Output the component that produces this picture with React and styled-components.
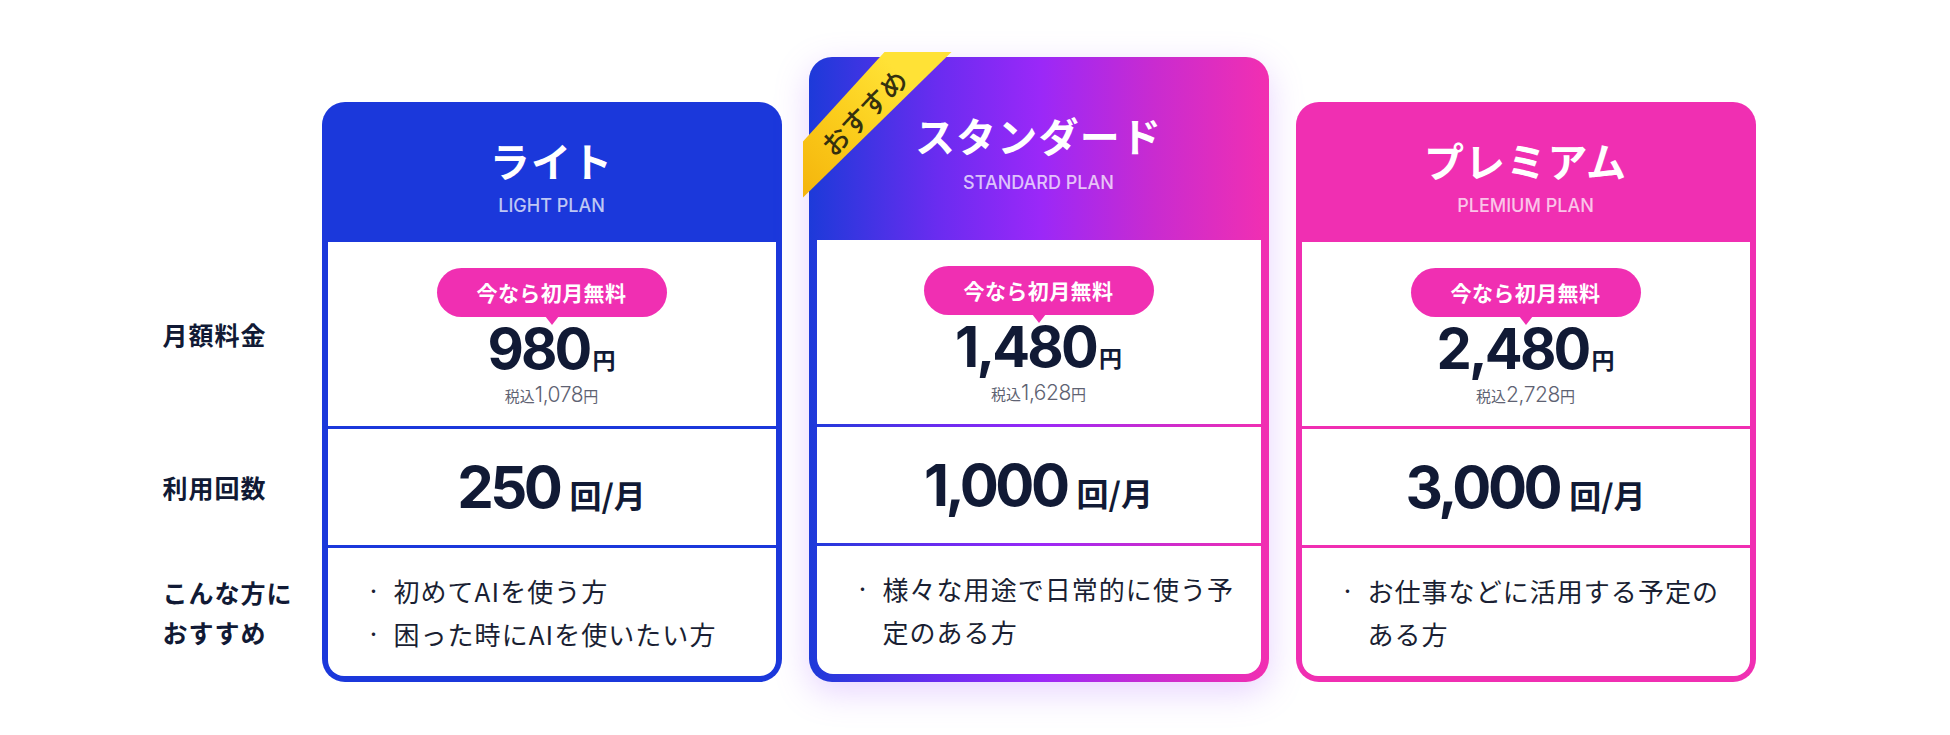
import React from 'react';
import styled, { createGlobalStyle } from 'styled-components';

const GlobalStyle = createGlobalStyle`
  html, body {
    margin: 0;
    padding: 0;
    background: #ffffff;
  }
  body {
    font-family: "Noto Sans CJK JP", "Noto Sans", sans-serif;
    color: #111a35;
  }
`;

const BLUE = '#1b38db';
const PINK = '#f02fb2';
const GRADIENT = 'linear-gradient(90deg, #1d3ad9 0%, #6a2cf0 28%, #9a28f8 50%, #c92bd0 75%, #f22fb1 100%)';

const Page = styled.div`
  height: 735px;
  box-sizing: border-box;
  padding: 57px 32px 0 0;
  display: flex;
  justify-content: center;
  align-items: flex-start;
`;

const Table = styled.div`
  display: flex;
  align-items: flex-end;
  gap: 27px;
`;

const LabelColumn = styled.div`
  width: 132px;
  display: flex;
  flex-direction: column;
  gap: 3px;
  padding-bottom: 6px;
`;

const RowLabel = styled.div`
  height: ${p => p.$h}px;
  display: flex;
  align-items: center;
  font-size: 25px;
  font-weight: 700;
  line-height: 40px;
  letter-spacing: 0.04em;
  color: #111a35;
`;

const Card = styled.div`
  position: relative;
  width: 460px;
  box-sizing: border-box;
  background: ${p => p.$bg};
  padding: 0 ${p => p.$border}px ${p => p.$border}px;
  border-radius: 23px;
  display: flex;
  flex-direction: column;
  box-shadow: ${p => (p.$glow ? '0 10px 34px rgba(168, 96, 255, 0.28)' : 'none')};
`;

const CardHeader = styled.div`
  height: ${p => p.$h}px;
  box-sizing: border-box;
  padding-top: ${p => p.$top}px;
  display: flex;
  flex-direction: column;
  align-items: center;
  color: #ffffff;
`;

const Title = styled.div`
  font-size: 40px;
  font-weight: 700;
  line-height: 52px;
  letter-spacing: 0.03em;
`;

const Subtitle = styled.div`
  margin-top: ${p => p.$gap}px;
  font-family: Inter, "Noto Sans", sans-serif;
  font-size: 18px;
  font-weight: 500;
  line-height: 23px;
  color: rgba(255, 255, 255, 0.72);
`;

const Body = styled.div`
  display: flex;
  flex-direction: column;
  gap: 3px;
`;

const Section = styled.div`
  height: ${p => p.$h}px;
  box-sizing: border-box;
  background: #ffffff;
  border-radius: ${p => (p.$last ? '0 0 16px 16px' : '0')};
  display: flex;
  flex-direction: column;
  align-items: center;
  justify-content: ${p => (p.$center ? 'center' : 'flex-start')};
`;

const PriceSection = styled(Section)`
  padding-top: 26px;
`;

const Badge = styled.div`
  position: relative;
  width: 230px;
  height: 49px;
  border-radius: 25px;
  background: ${PINK};
  color: #ffffff;
  font-size: 21px;
  font-weight: 700;
  line-height: 49px;
  text-align: center;
  letter-spacing: 0.02em;

  &::after {
    content: "";
    position: absolute;
    left: 50%;
    bottom: -8px;
    margin-left: -7px;
    border-left: 7px solid transparent;
    border-right: 7px solid transparent;
    border-top: 9px solid ${PINK};
  }
`;

const Price = styled.div`
  margin-top: 4px;
  display: flex;
  align-items: baseline;
  gap: 3px;
`;

const PriceNum = styled.span`
  font-family: Inter, "Noto Sans", sans-serif;
  font-size: 56px;
  font-weight: 700;
  line-height: 56px;
  letter-spacing: -0.05em;
  color: #111a35;
`;

const Yen = styled.span`
  font-size: 23px;
  font-weight: 700;
  color: #111a35;
`;

const Tax = styled.div`
  margin-top: 6px;
  display: flex;
  align-items: baseline;
  color: #5e6272;
  line-height: 24px;
`;

const TaxSmall = styled.span`
  font-size: 15px;
`;

const TaxNum = styled.span`
  font-family: Inter, "Noto Sans", sans-serif;
  font-size: 21px;
  font-weight: 300;
  letter-spacing: -0.02em;
`;

const Count = styled.div`
  display: flex;
  align-items: baseline;
  gap: 10px;
`;

const CountNum = styled.span`
  font-family: Inter, "Noto Sans", sans-serif;
  font-size: 58px;
  font-weight: 700;
  line-height: 64px;
  letter-spacing: -0.06em;
  color: #111a35;
`;

const CountUnit = styled.span`
  font-size: 32px;
  font-weight: 700;
  color: #111a35;
`;

const RecList = styled.ul`
  list-style: none;
  margin: 0;
  padding: 0 20px 0 36px;
  width: 100%;
  box-sizing: border-box;
`;

const RecItem = styled.li`
  display: flex;
  gap: 10px;
  font-size: 26px;
  line-height: 43px;
  letter-spacing: 0.04em;
  color: #1a1f33;
`;

const Bullet = styled.span`
  flex: 0 0 20px;
  text-align: center;
  font-size: 16px;
  line-height: 43px;
  letter-spacing: 0;
`;

const Ribbon = styled.div`
  position: absolute;
  left: -6px;
  top: -5px;
  width: 149px;
  height: 146px;
  background: linear-gradient(45deg, #f4b40c 0%, #fbcd1c 40%, #ffe236 75%);
  clip-path: polygon(82px 0, 149px 0, 0 146px, 0 90px);
`;

const RibbonText = styled.span`
  position: absolute;
  left: 61px;
  top: 60px;
  transform: translate(-50%, -50%) rotate(-45deg);
  font-size: 27px;
  font-weight: 500;
  line-height: 30px;
  white-space: nowrap;
  color: #34300f;
`;

const plans = [
  {
    name: 'ライト',
    en: 'LIGHT PLAN',
    bg: BLUE,
    border: 6,
    header: { h: 140, top: 32, gap: 8 },
    price: '980',
    tax: '1,078',
    count: '250',
    recs: ['初めてAIを使う方', '困った時にAIを使いたい方'],
  },
  {
    name: 'スタンダード',
    en: 'STANDARD PLAN',
    bg: GRADIENT,
    border: 8,
    featured: true,
    header: { h: 183, top: 52, gap: 10 },
    price: '1,480',
    tax: '1,628',
    count: '1,000',
    recs: ['様々な用途で日常的に使う予定のある方'],
  },
  {
    name: 'プレミアム',
    en: 'PLEMIUM PLAN',
    bg: PINK,
    border: 6,
    header: { h: 140, top: 32, gap: 8 },
    price: '2,480',
    tax: '2,728',
    count: '3,000',
    recs: ['お仕事などに活用する予定のある方'],
  },
];

const PlanCard = ({ plan }) => (
  <Card $bg={plan.bg} $border={plan.border} $glow={plan.featured}>
    {plan.featured && (
      <Ribbon>
        <RibbonText>おすすめ</RibbonText>
      </Ribbon>
    )}
    <CardHeader $h={plan.header.h} $top={plan.header.top}>
      <Title>{plan.name}</Title>
      <Subtitle $gap={plan.header.gap}>{plan.en}</Subtitle>
    </CardHeader>
    <Body>
      <PriceSection $h={184}>
        <Badge>今なら初月無料</Badge>
        <Price>
          <PriceNum>{plan.price}</PriceNum>
          <Yen>円</Yen>
        </Price>
        <Tax>
          <TaxSmall>税込</TaxSmall>
          <TaxNum>{plan.tax}</TaxNum>
          <TaxSmall>円</TaxSmall>
        </Tax>
      </PriceSection>
      <Section $h={116} $center>
        <Count>
          <CountNum>{plan.count}</CountNum>
          <CountUnit>回/月</CountUnit>
        </Count>
      </Section>
      <Section $h={128} $center $last>
        <RecList>
          {plan.recs.map(r => (
            <RecItem key={r}>
              <Bullet>・</Bullet>
              <span>{r}</span>
            </RecItem>
          ))}
        </RecList>
      </Section>
    </Body>
  </Card>
);

const App = () => (
  <>
    <GlobalStyle />
    <Page>
      <Table>
        <LabelColumn>
          <RowLabel $h={184}>月額料金</RowLabel>
          <RowLabel $h={116}>利用回数</RowLabel>
          <RowLabel $h={128}>
            こんな方に
            <br />
            おすすめ
          </RowLabel>
        </LabelColumn>
        {plans.map(p => (
          <PlanCard key={p.en} plan={p} />
        ))}
      </Table>
    </Page>
  </>
);

export default App;
